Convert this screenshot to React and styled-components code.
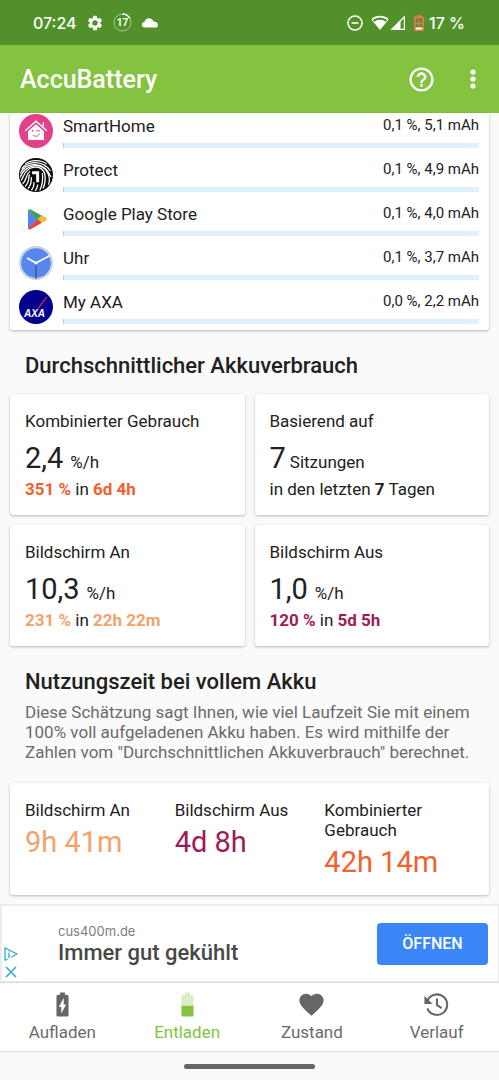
import React from "react";
import styled, { createGlobalStyle, ThemeProvider } from "styled-components";

const theme = {
  statusBar: "#52902a",
  appBar: "#84c33f",
  accent: "#84c33f",
  page: "#fafafa",
  card: "#ffffff",
  text: "#212121",
  muted: "#6b6b6b",
  orange: "#f1602f",
  peach: "#f4a26c",
  plum: "#a01a58",
};

const GlobalStyle = createGlobalStyle`
  * { box-sizing: border-box; }
  body {
    margin: 0;
    background: ${theme.page};
    color: ${theme.text};
    font-family: Roboto, "Liberation Sans", sans-serif;
    font-size: 17px;
    line-height: 20px;
  }
  h1, h2, h3, p, ul { margin: 0; padding: 0; }
  button { border: 0; padding: 0; background: none; font: inherit; color: inherit; cursor: pointer; }
  svg { display: block; flex: none; }
`;

const Screen = styled.div`
  display: flex;
  flex-direction: column;
  min-height: 100vh;
`;

const StatusBar = styled.div`
  display: flex;
  align-items: center;
  justify-content: space-between;
  height: 45px;
  padding: 0 34px 0 33px;
  background: ${(p) => p.theme.statusBar};
  color: #fff;
  font-family: Inter, Roboto, sans-serif;
  font-size: 16px;
  font-weight: 500;
`;

const StatusGroup = styled.div`
  display: flex;
  align-items: center;
  gap: ${(p) => p.$gap}px;
`;

const AppBar = styled.header`
  display: flex;
  align-items: center;
  gap: 14px;
  height: 68px;
  padding: 0 12px 0 20px;
  background: ${(p) => p.theme.appBar};
  color: #fff;
`;

const AppTitle = styled.h1`
  flex: 1;
  padding-top: 2px;
  font-size: 25px;
  font-weight: 500;
  line-height: 32px;
`;

const IconButton = styled.button`
  display: grid;
  place-items: center;
  width: ${(p) => p.$width}px;
  height: 48px;
`;

const Content = styled.main`
  flex: 1;
  padding: 0 10px 9px;
`;

const Card = styled.section`
  border-radius: 3px;
  background: ${(p) => p.theme.card};
  box-shadow: 0 1px 3px rgba(0, 0, 0, 0.28);
`;

const AppListCard = styled(Card)`
  border-radius: 0 0 3px 3px;
  padding: 1px 10px 6px 9px;
`;

const AppList = styled.ul`
  display: flex;
  flex-direction: column;
  gap: 10px;
  list-style: none;
`;

const AppRow = styled.li`
  display: flex;
  gap: 10px;
  height: 34px;
`;

const AppInfo = styled.div`
  flex: 1;
  display: flex;
  flex-direction: column;
  justify-content: space-between;
`;

const AppLine = styled.div`
  display: flex;
  justify-content: space-between;
  line-height: 24px;
`;

const AppUsage = styled.span`
  font-size: 15px;
  line-height: 22px;
`;

const Track = styled.div`
  height: 5px;
  background: #def0fc;
`;

const TrackFill = styled.div`
  width: ${(p) => p.$share}%;
  min-width: 1px;
  height: 100%;
  background: #a9d9f5;
`;

const SectionTitle = styled.h2`
  padding: 22px 15px 0;
  font-size: 22px;
  font-weight: 500;
  line-height: 28px;
`;

const SectionNote = styled.p`
  padding: 6px 15px 21px;
  color: ${(p) => p.theme.muted};
`;

const StatGrid = styled.div`
  display: grid;
  grid-template-columns: 1fr 1fr;
  gap: 10px;
  margin-top: 14px;
`;

const StatCard = styled(Card)`
  padding: 17px 15px 16px;
`;

const Label = styled.h3`
  font-size: 17px;
  font-weight: 400;
  line-height: 20px;
`;

const StatValue = styled.p`
  display: flex;
  align-items: baseline;
  gap: ${(p) => p.$gap}px;
  height: 36px;
  margin: 9px 0 3px;
  line-height: 36px;
`;

const Figure = styled.span`
  font-size: 29px;
`;

const Strong = styled.b`
  font-weight: 700;
  color: ${(p) => (p.$tone ? p.theme[p.$tone] : "inherit")};
`;

const RuntimeCard = styled(Card)`
  display: grid;
  grid-template-columns: repeat(3, 1fr);
  padding: 17px 15px 15px;
`;

const RuntimeValue = styled.p`
  margin-top: 4px;
  font-size: 29px;
  line-height: 36px;
  color: ${(p) => p.theme[p.$tone]};
`;

const AdBanner = styled.aside`
  display: flex;
  align-items: center;
  height: 78px;
  padding: 0 10px 0 2px;
  border: 2px solid #ececec;
  border-bottom-width: 1px;
  border-right-width: 1px;
  background: #fff;
`;

const AdChoices = styled.div`
  display: flex;
  flex-direction: column;
  align-self: flex-end;
  gap: 4px;
  margin: 0 40px 2px 0;
`;

const AdText = styled.div`
  flex: 1;
`;

const AdHost = styled.p`
  font-family: Inter, Roboto, sans-serif;
  font-size: 13px;
  line-height: 18px;
  color: #7d7d7d;
`;

const AdHeadline = styled.p`
  font-size: 22px;
  font-weight: 500;
  line-height: 26px;
  color: #484848;
`;

const AdButton = styled.button`
  width: 111px;
  height: 42px;
  border-radius: 4px;
  background: #3b86f7;
  color: #fff;
  font-size: 16px;
  font-weight: 500;
`;

const TabBar = styled.nav`
  display: grid;
  grid-template-columns: repeat(4, 1fr);
  height: 70px;
  border-top: 1px solid #dcdcdc;
  border-bottom: 1px solid #dcdcdc;
  background: #fff;
`;

const Tab = styled.button`
  display: flex;
  flex-direction: column;
  align-items: center;
  gap: 3px;
  padding-top: 7px;
  color: ${(p) => (p.$active ? p.theme.accent : p.theme.muted)};
`;

const GestureArea = styled.div`
  display: grid;
  place-items: center;
  height: 28px;
`;

const GestureHandle = styled.div`
  width: 131px;
  height: 5px;
  border-radius: 3px;
  background: #666;
`;

const GEAR =
  "M19.14 12.94c.04-.3.06-.61.06-.94 0-.32-.02-.64-.07-.94l2.03-1.58a.49.49 0 0 0 .12-.61l-1.92-3.32a.49.49 0 0 0-.59-.22l-2.39.96c-.5-.38-1.03-.7-1.62-.94l-.36-2.54a.48.48 0 0 0-.48-.41h-3.84a.47.47 0 0 0-.47.41l-.36 2.54c-.59.24-1.13.57-1.62.94l-2.39-.96a.48.48 0 0 0-.59.22L2.74 8.87a.47.47 0 0 0 .12.61l2.03 1.58c-.05.3-.09.63-.09.94s.02.64.07.94l-2.03 1.58a.49.49 0 0 0-.12.61l1.92 3.32c.12.22.37.29.59.22l2.39-.96c.5.38 1.03.7 1.62.94l.36 2.54c.05.24.24.41.48.41h3.84c.24 0 .44-.17.47-.41l.36-2.54c.59-.24 1.13-.56 1.62-.94l2.39.96c.22.08.47 0 .59-.22l1.92-3.32a.47.47 0 0 0-.12-.61l-2.01-1.58zM12 15.6A3.6 3.6 0 1 1 12 8.4a3.6 3.6 0 0 1 0 7.2z";

function GearIcon() {
  return (
    <svg width="18" height="18" viewBox="0 0 24 24" fill="#fff" aria-hidden="true">
      <path d={GEAR} />
    </svg>
  );
}

function BatteryLevelIcon() {
  return (
    <svg width="19" height="19" viewBox="0 0 19 19" aria-hidden="true">
      <circle cx="9.5" cy="9.5" r="8.5" fill="none" stroke="#fff" strokeOpacity="0.5" />
      <path d="M9.5 1a8.5 8.5 0 0 1 7.4 4.3" fill="none" stroke="#fff" strokeWidth="1.5" />
      <text x="9.5" y="13" textAnchor="middle" fill="#fff" fontSize="10" fontWeight="700" fontFamily="Roboto, sans-serif">
        17
      </text>
    </svg>
  );
}

function CloudIcon() {
  return (
    <svg width="18" height="12" viewBox="0 0 18 12" fill="#fff" aria-hidden="true">
      <path d="M4 10.500C2 10.500.8 9.300.8 7.800.8 6.300 1.900 5.200 3.400 5.100 4 2.700 5.800 1.200 8 1.200c2.200 0 3.900 1.300 4.600 3.300 2.500.1 4.200 1.400 4.400 3.400.1 1.500-.9 2.600-2.400 2.600z" />
    </svg>
  );
}

function DoNotDisturbIcon() {
  return (
    <svg width="16" height="16" viewBox="0 0 16 16" fill="none" stroke="#fff" strokeWidth="1.6" aria-hidden="true">
      <circle cx="8" cy="8" r="7" />
      <path d="M4.500 8h7" />
    </svg>
  );
}

function WifiIcon() {
  return (
    <svg width="18" height="16" viewBox="0 0 18 16" aria-hidden="true">
      <path d="M.9 4.600a12.400 12.400 0 0 1 16.200 0" fill="none" stroke="#fff" strokeWidth="1.600" />
      <path d="M2.600 7.200a9.800 9.800 0 0 1 12.800 0L9 15z" fill="#fff" />
      <path d="M1 4.800 3.200 7.500M17 4.800l-2.200 2.700" stroke="#fff" strokeWidth="1" />
    </svg>
  );
}

function SignalIcon() {
  return (
    <svg width="16" height="16" viewBox="0 0 16 16" aria-hidden="true">
      <path d="M1.800 14.400 14.400 1.800v12.600z" fill="none" stroke="#fff" strokeWidth="1.200" />
      <path d="M.5 15 10.500 5v10z" fill="#fff" />
    </svg>
  );
}

function StatusBatteryIcon() {
  return (
    <svg width="10" height="16" viewBox="0 0 10 16" aria-hidden="true">
      <path d="M3 0h4v1.500h2a1 1 0 0 1 1 1V15a1 1 0 0 1-1 1H1a1 1 0 0 1-1-1V2.500a1 1 0 0 1 1-1h2z" fill="#ee7350" />
      <path d="M1.700 3.500h6.600v9H1.700z" fill="#52902a" />
      <path d="M5 5.500v6M2.200 8.500h5.600" stroke="#ee7350" strokeWidth="1.400" />
      <path d="M1.700 12.500h6.600v2H1.700z" fill="#fff" />
    </svg>
  );
}

function HelpIcon() {
  return (
    <svg width="29" height="29" viewBox="0 0 24 24" fill="#fff" aria-hidden="true">
      <path d="M11 18h2v-2h-2v2zm1-16C6.480 2 2 6.480 2 12s4.480 10 10 10 10-4.480 10-10S17.520 2 12 2zm0 18c-4.410 0-8-3.590-8-8s3.590-8 8-8 8 3.590 8 8-3.590 8-8 8zm0-14c-2.210 0-4 1.790-4 4h2c0-1.100.9-2 2-2s2 .9 2 2c0 2-3 1.750-3 5h2c0-2.250 3-2.500 3-5 0-2.210-1.790-4-4-4z" />
    </svg>
  );
}

function MoreIcon() {
  return (
    <svg width="6" height="20" viewBox="0 0 6 20" fill="#fff" aria-hidden="true">
      <circle cx="3" cy="3" r="2.600" />
      <circle cx="3" cy="10" r="2.600" />
      <circle cx="3" cy="17" r="2.600" />
    </svg>
  );
}

function SmartHomeLogo() {
  return (
    <svg width="34" height="34" viewBox="0 0 34 34" aria-hidden="true">
      <circle cx="17" cy="17" r="17" fill="#e2408a" />
      <path d="M6.500 16.500 17 7.200l10.500 9.300" fill="none" stroke="#fff" strokeWidth="1.300" strokeLinecap="round" />
      <path d="M24.300 8.500v4" stroke="#fff" strokeWidth="1.400" />
      <path d="M9 17.200 17 10.200l8 7V26H9z" fill="#fff" />
      <circle cx="13.700" cy="16.700" r="0.900" fill="#e2408a" />
      <path d="M17.700 16.800h3M14.200 21.200c2 1.900 5 1.400 6.200-1.400" fill="none" stroke="#e2408a" strokeWidth="1" strokeLinecap="round" />
    </svg>
  );
}

function ProtectLogo() {
  return (
    <svg width="34" height="34" viewBox="0 0 34 34" aria-hidden="true">
      <defs>
        <clipPath id="protect-disc">
          <circle cx="17" cy="17" r="16" />
        </clipPath>
      </defs>
      <circle cx="17" cy="17" r="17" fill="#0b0b0b" />
      <g fill="none" stroke="#fff" strokeWidth="1.300" clipPath="url(#protect-disc)">
        <path d="M6 6C12 1.500 22 1.500 28 6" />
        <path d="M2.500 11C9 2.500 24 2 31.500 13" />
        <path d="M1 15.500C8 3.500 25 3 32 19" />
        <path d="M1 19.500C6 6.500 23 3 28.800 15c2 4.500 1.700 9 .7 12" />
        <path d="M1.500 23C5 19.500 5 12.500 12 10c7-2.500 13 .5 14 7.500.6 5-.2 9-2 13" />
        <path d="M3.500 26C8.500 21.500 6.500 16 11 13.500" />
        <path d="M23.300 15c1 6 0 12-2.500 17.500" />
        <path d="M6 28.500c5-4.500 3-8.500 4.500-12" />
        <path d="M8.500 31C13 27 12 23 12.500 19" />
        <path d="M12 33c3-3.500 3.200-6 3-9M16 33.500c2-3 2.500-4.500 2.800-7" />
      </g>
      <path d="M12.500 12.500h8.300V25h-4.300v-8h-4z" fill="#fff" stroke="#0b0b0b" strokeWidth="1.300" />
    </svg>
  );
}

function PlayStoreLogo() {
  return (
    <svg width="34" height="34" viewBox="0 0 34 34" aria-hidden="true">
      <path d="M9 8.200v18.600L18.500 17z" fill="#4a86f0" />
      <path d="M9 8c.6-.9 1.700-1 2.700-.5l11.300 6.300-4.500 4z" fill="#3ba457" />
      <path d="M23 13.200l4 2.300c1.100.7 1.100 2.300 0 3l-4 2.300L18.500 17z" fill="#f6bc33" />
      <path d="M18.500 17l4.500 3.800-11.300 6.400c-1 .6-2.200.4-2.700-.6z" fill="#de4a3c" />
    </svg>
  );
}

function ClockLogo() {
  return (
    <svg width="34" height="34" viewBox="0 0 34 34" aria-hidden="true">
      <circle cx="17" cy="17" r="17" fill="#c9d3da" />
      <circle cx="17" cy="17" r="14.800" fill="#5686ee" />
      <path d="M17 17v16" stroke="#45515c" strokeWidth="1.200" />
      <path d="M8 12l9 5L31 9.500" fill="none" stroke="#fff" strokeWidth="1.600" />
      <circle cx="17" cy="17" r="1.600" fill="#fff" />
    </svg>
  );
}

function AxaLogo() {
  return (
    <svg width="34" height="34" viewBox="0 0 34 34" aria-hidden="true">
      <circle cx="17" cy="17" r="17" fill="#00008f" />
      <path d="M19 18.500 27.800 6.800" stroke="#f02a3a" strokeWidth="1.200" />
      <text x="15.500" y="27" textAnchor="middle" fill="#fff" fontSize="10" fontWeight="700" fontStyle="italic" fontFamily="Liberation Sans Narrow, Liberation Sans, sans-serif">
        AXA
      </text>
    </svg>
  );
}

function AdInfoIcon() {
  return (
    <svg width="14" height="14" viewBox="0 0 14 14" fill="none" stroke="#35a7cf" strokeWidth="1.300" strokeLinejoin="round" aria-hidden="true">
      <path d="M3.500 12.300 1 13V1l12 6-6 3.200" />
      <path d="M5 5.600v5.400M5 3.600v1" />
    </svg>
  );
}

function CloseIcon() {
  return (
    <svg width="14" height="14" viewBox="0 0 14 14" stroke="#35a7cf" strokeWidth="1.500" aria-hidden="true">
      <path d="M2 2l10 10M12 2 2 12" />
    </svg>
  );
}

function ChargeIcon() {
  return (
    <svg width="29" height="29" viewBox="0 0 24 24" fill="#666" aria-hidden="true">
      <path d="M15.670 4H14V2h-4v2H8.330C7.600 4 7 4.600 7 5.330v15.330C7 21.400 7.600 22 8.330 22h7.330c.74 0 1.340-.6 1.340-1.330V5.330C17 4.600 16.400 4 15.670 4zM11 19.500V14H9l4-7.500V12h2z" />
    </svg>
  );
}

function DischargeIcon() {
  return (
    <svg width="29" height="29" viewBox="0 0 24 24" fill="#84c33f" aria-hidden="true">
      <path d="M17 5.330C17 4.600 16.400 4 15.670 4H14V2h-4v2H8.330C7.600 4 7 4.600 7 5.330V13h10z" fillOpacity="0.3" />
      <path d="M7 13v7.670C7 21.400 7.600 22 8.330 22h7.330c.74 0 1.340-.6 1.340-1.330V13z" />
    </svg>
  );
}

function HeartIcon() {
  return (
    <svg width="29" height="29" viewBox="0 0 24 24" fill="#666" aria-hidden="true">
      <path d="M12 21.350l-1.450-1.320C5.400 15.360 2 12.280 2 8.500 2 5.420 4.420 3 7.500 3c1.740 0 3.410.81 4.500 2.090C13.090 3.810 14.760 3 16.500 3 19.580 3 22 5.420 22 8.500c0 3.780-3.400 6.860-8.550 11.540z" />
    </svg>
  );
}

function HistoryIcon() {
  return (
    <svg width="29" height="29" viewBox="0 0 24 24" fill="none" stroke="#666" strokeWidth="1.700" aria-hidden="true">
      <path d="M4.200 9.700a8.500 8.500 0 1 1 .2 5.500" />
      <path d="M12.400 7v5.600l4 2.400" />
      <path d="M2 4.800V11.500h6.800z" fill="#666" stroke="none" />
    </svg>
  );
}

const APPS = [
  { name: "SmartHome", usage: "0,1 %, 5,1 mAh", Logo: SmartHomeLogo, share: 0.1 },
  { name: "Protect", usage: "0,1 %, 4,9 mAh", Logo: ProtectLogo, share: 0.1 },
  { name: "Google Play Store", usage: "0,1 %, 4,0 mAh", Logo: PlayStoreLogo, share: 0.1 },
  { name: "Uhr", usage: "0,1 %, 3,7 mAh", Logo: ClockLogo, share: 0.1 },
  { name: "My AXA", usage: "0,0 %, 2,2 mAh", Logo: AxaLogo, share: 0 },
];

const RUNTIMES = [
  { label: "Bildschirm An", value: "9h 41m", tone: "peach" },
  { label: "Bildschirm Aus", value: "4d 8h", tone: "plum" },
  { label: "Kombinierter Gebrauch", value: "42h 14m", tone: "orange" },
];

const TABS = [
  { label: "Aufladen", Icon: ChargeIcon },
  { label: "Entladen", Icon: DischargeIcon, active: true },
  { label: "Zustand", Icon: HeartIcon },
  { label: "Verlauf", Icon: HistoryIcon },
];

function Stat({ label, value, unit, gap = 7, children }) {
  return (
    <StatCard>
      <Label>{label}</Label>
      <StatValue $gap={gap}>
        <Figure>{value}</Figure>
        <span>{unit}</span>
      </StatValue>
      <p>{children}</p>
    </StatCard>
  );
}

function Drain({ tone, percent, time }) {
  return (
    <>
      <Strong $tone={tone}>{percent}</Strong> in <Strong $tone={tone}>{time}</Strong>
    </>
  );
}

export default function App() {
  return (
    <ThemeProvider theme={theme}>
      <GlobalStyle />
      <Screen>
        <StatusBar>
          <StatusGroup $gap={9}>
            <span>07:24</span>
            <GearIcon />
            <BatteryLevelIcon />
            <CloudIcon />
          </StatusGroup>
          <StatusGroup $gap={8}>
            <DoNotDisturbIcon />
            <StatusGroup $gap={1}>
              <WifiIcon />
              <SignalIcon />
            </StatusGroup>
            <StatusGroup $gap={5}>
              <StatusBatteryIcon />
              <span>17 %</span>
            </StatusGroup>
          </StatusGroup>
        </StatusBar>

        <AppBar>
          <AppTitle>AccuBattery</AppTitle>
          <IconButton $width={48} aria-label="Hilfe">
            <HelpIcon />
          </IconButton>
          <IconButton $width={28} aria-label="Weitere Optionen">
            <MoreIcon />
          </IconButton>
        </AppBar>

        <Content>
          <AppListCard>
            <AppList>
              {APPS.map(({ name, usage, Logo, share }) => (
                <AppRow key={name}>
                  <Logo />
                  <AppInfo>
                    <AppLine>
                      <span>{name}</span>
                      <AppUsage>{usage}</AppUsage>
                    </AppLine>
                    <Track>
                      <TrackFill $share={share} />
                    </Track>
                  </AppInfo>
                </AppRow>
              ))}
            </AppList>
          </AppListCard>

          <SectionTitle>Durchschnittlicher Akkuverbrauch</SectionTitle>
          <StatGrid>
            <Stat label="Kombinierter Gebrauch" value="2,4" unit="%/h">
              <Drain tone="orange" percent="351 %" time="6d 4h" />
            </Stat>
            <Stat label="Basierend auf" value="7" unit="Sitzungen" gap={4}>
              in den letzten <Strong>7</Strong> Tagen
            </Stat>
            <Stat label="Bildschirm An" value="10,3" unit="%/h">
              <Drain tone="peach" percent="231 %" time="22h 22m" />
            </Stat>
            <Stat label="Bildschirm Aus" value="1,0" unit="%/h">
              <Drain tone="plum" percent="120 %" time="5d 5h" />
            </Stat>
          </StatGrid>

          <SectionTitle>Nutzungszeit bei vollem Akku</SectionTitle>
          <SectionNote>
            Diese Schätzung sagt Ihnen, wie viel Laufzeit Sie mit einem 100% voll aufgeladenen Akku haben. Es wird
            mithilfe der Zahlen vom "Durchschnittlichen Akkuverbrauch" berechnet.
          </SectionNote>
          <RuntimeCard>
            {RUNTIMES.map(({ label, value, tone }) => (
              <div key={label}>
                <Label>{label}</Label>
                <RuntimeValue $tone={tone}>{value}</RuntimeValue>
              </div>
            ))}
          </RuntimeCard>
        </Content>

        <AdBanner>
          <AdChoices>
            <button aria-label="Informationen zur Anzeige">
              <AdInfoIcon />
            </button>
            <button aria-label="Anzeige schließen">
              <CloseIcon />
            </button>
          </AdChoices>
          <AdText>
            <AdHost>cus400m.de</AdHost>
            <AdHeadline>Immer gut gekühlt</AdHeadline>
          </AdText>
          <AdButton>ÖFFNEN</AdButton>
        </AdBanner>

        <TabBar>
          {TABS.map(({ label, Icon, active }) => (
            <Tab key={label} $active={active} aria-current={active ? "page" : undefined}>
              <Icon />
              {label}
            </Tab>
          ))}
        </TabBar>
        <GestureArea>
          <GestureHandle />
        </GestureArea>
      </Screen>
    </ThemeProvider>
  );
}
